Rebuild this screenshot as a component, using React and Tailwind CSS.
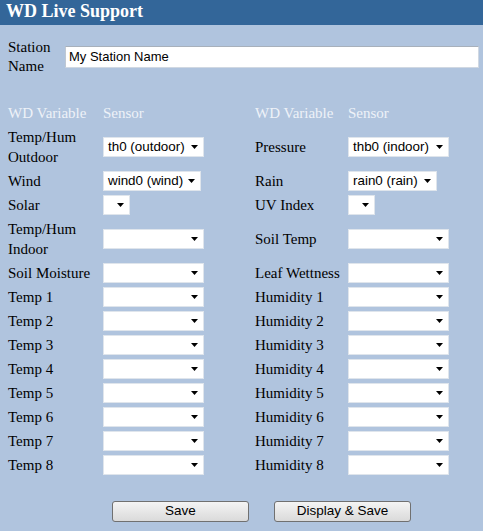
import React from "react";

function Arrow() {
  return (
    <svg width="7" height="4" viewBox="0 0 7 4" className="shrink-0">
      <path d="M0 0 H7 L3.5 4 Z" fill="#000" />
    </svg>
  );
}

function Sel({ text = "", w }) {
  return (
    <div
      className="h-[20px] bg-white border border-[#dfe5ec] flex items-center justify-between pl-[4px] pr-[5px] font-['Liberation_Sans',Arial,sans-serif] text-[13.4px] text-black whitespace-nowrap"
      style={{ width: w }}
    >
      <span>{text}</span>
      <Arrow />
    </div>
  );
}

const rows = [
  { h: "h-[44px]", l: ["Temp/Hum", "Outdoor"], s: "th0 (outdoor)", sw: 101, r: "Pressure", rs: "thb0 (indoor)", rw: 101 },
  { h: "h-[24px]", l: ["Wind"], s: "wind0 (wind)", sw: 98, r: "Rain", rs: "rain0 (rain)", rw: 89 },
  { h: "h-[24px]", l: ["Solar"], s: "", sw: 27, r: "UV Index", rs: "", rw: 27 },
  { h: "h-[44px]", l: ["Temp/Hum", "Indoor"], s: "", sw: 101, r: "Soil Temp", rs: "", rw: 101 },
  { h: "h-[24px]", l: ["Soil Moisture"], s: "", sw: 101, r: "Leaf Wettness", rs: "", rw: 101 },
  ...[1, 2, 3, 4, 5, 6, 7, 8].map((n) => ({
    h: "h-[24px]",
    l: ["Temp " + n],
    s: "",
    sw: 101,
    r: "Humidity " + n,
    rs: "",
    rw: 101,
  })),
];

export default function App() {
  return (
    <div className="w-[483px] h-[531px] bg-[#b0c4de] font-['Liberation_Serif','Times_New_Roman',serif] text-[15px] text-black overflow-hidden">
      <div className="h-[25px] bg-[#336699] px-[6px] text-white font-bold text-[18px] leading-[22px]">
        WD Live Support
      </div>

      <div className="mt-[13px] flex items-center pl-[8px] h-[38px]">
        <div className="w-[57px] leading-[19px]">
          Station
          <br />
          Name
        </div>
        <div className="h-[22px] w-[414px] bg-white border border-[#d0d8e2] border-t-[#a7b0bb] border-l-[#c0c8d2] flex items-center pl-[3px] font-['Liberation_Sans',Arial,sans-serif] text-[13px]">
          My Station Name
        </div>
      </div>

      <div className="mt-[25px] pl-[8px] grid grid-cols-[95px_152px_93px_1fr]">
        <div className="h-[24px] flex items-center text-[#eef2f8]">WD Variable</div>
        <div className="h-[24px] flex items-center text-[#eef2f8]">Sensor</div>
        <div className="h-[24px] flex items-center text-[#eef2f8]">WD Variable</div>
        <div className="h-[24px] flex items-center text-[#eef2f8]">Sensor</div>
        {rows.map((r, i) => (
          <React.Fragment key={i}>
            <div className={r.h + " flex items-center leading-[20px] whitespace-nowrap"}>
              <div>
                {r.l.map((t, j) => (
                  <div key={j}>{t}</div>
                ))}
              </div>
            </div>
            <div className={r.h + " flex items-center"}>
              <Sel text={r.s} w={r.sw} />
            </div>
            <div className={r.h + " flex items-center whitespace-nowrap"}>{r.r}</div>
            <div className={r.h + " flex items-center"}>
              <Sel text={r.rs} w={r.rw} />
            </div>
          </React.Fragment>
        ))}
      </div>

      <div className="mt-[24px] pl-[112px] flex gap-[25px] font-['Liberation_Sans',Arial,sans-serif] text-[13.5px]">
        <button className="w-[137px] h-[21px] border border-[#707070] rounded-[3px] bg-gradient-to-b from-[#f4f4f4] to-[#dadada] flex items-center justify-center">
          Save
        </button>
        <button className="w-[137px] h-[21px] border border-[#707070] rounded-[3px] bg-gradient-to-b from-[#f4f4f4] to-[#dadada] flex items-center justify-center">
          Display &amp; Save
        </button>
      </div>
    </div>
  );
}
